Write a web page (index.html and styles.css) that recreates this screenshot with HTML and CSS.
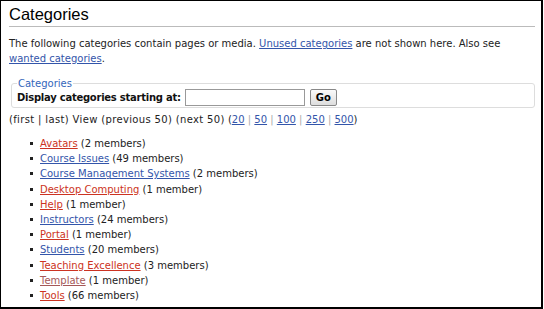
FILE: index.html
```html
<!DOCTYPE html>
<html>
<head>
<meta charset="utf-8">
<link rel="stylesheet" href="styles.css">
</head>
<body>
<div class="frame">
  <h1 class="title">Categories</h1>
  <p class="intro">The following categories contain pages or media. <a class="link" href="#">Unused categories</a> are not shown here. Also see <a class="link" href="#">wanted categories</a>.</p>
  <fieldset class="box">
    <legend class="legend">Categories</legend>
    <div class="row">
      <label class="label">Display categories starting at:</label>
      <input class="field" type="text">
      <button class="go">Go</button>
    </div>
  </fieldset>
  <div class="nav"><span class="pager">(first | last) View (previous 50) (next 50)</span> (<a class="link" href="#">20</a> <span class="sep">|</span> <a class="link" href="#">50</a> <span class="sep">|</span> <a class="link" href="#">100</a> <span class="sep">|</span> <a class="link" href="#">250</a> <span class="sep">|</span> <a class="link" href="#">500</a>)</div>
  <ul class="list">
    <li class="item"><a class="new" href="#">Avatars</a> (2 members)</li>
    <li class="item"><a class="link" href="#">Course Issues</a> (49 members)</li>
    <li class="item"><a class="link" href="#">Course Management Systems</a> (2 members)</li>
    <li class="item"><a class="new" href="#">Desktop Computing</a> (1 member)</li>
    <li class="item"><a class="new" href="#">Help</a> (1 member)</li>
    <li class="item"><a class="link" href="#">Instructors</a> (24 members)</li>
    <li class="item"><a class="new" href="#">Portal</a> (1 member)</li>
    <li class="item"><a class="link" href="#">Students</a> (20 members)</li>
    <li class="item"><a class="new" href="#">Teaching Excellence</a> (3 members)</li>
    <li class="item"><a class="visited" href="#">Template</a> (1 member)</li>
    <li class="item"><a class="new" href="#">Tools</a> (66 members)</li>
  </ul>
</div>
</body>
</html>
```
FILE: styles.css
```css
html, body {
  margin: 0;
  padding: 0;
  background: #fff;
}
.frame {
  box-sizing: border-box;
  width: 543px;
  height: 309px;
  border: 1px solid #000;
  border-right-width: 2px;
  border-bottom-width: 2px;
  padding: 0 6px 0 8px;
  font-family: "DejaVu Sans", Verdana, sans-serif;
  font-size: 10px;
  color: #222;
  overflow: hidden;
}
.title {
  margin: 3px 0 0 0;
  padding: 0 0 2px 0;
  font-family: "Liberation Sans", Arial, sans-serif;
  font-size: 16.5px;
  font-weight: normal;
  color: #000;
  line-height: 20px;
  border-bottom: 1px solid #bbb;
}
.intro {
  margin: 9px 0 0 0;
  line-height: 15px;
}
.link { color: #3355aa; text-decoration: underline; }
.new { color: #cc3322; text-decoration: underline; }
.visited { color: #a55858; text-decoration: underline; }
.box {
  margin: 12px 0 0 2px;
  padding: 0 5px 0 5px;
  border: 1px solid #ddd;
  border-radius: 3px;
}
.legend {
  padding: 0 1px;
  color: #3366bb;
  font-size: 10px;
}
.row {
  display: flex;
  align-items: center;
  gap: 4px;
  padding-bottom: 1px;
}
.label {
  font-weight: bold;
  color: #111;
  letter-spacing: -0.25px;
}
.field {
  width: 118px;
  height: 15px;
  border: 1px solid #999;
  padding: 0;
  margin: 0;
}
.go {
  margin-left: 1px;
  height: 17px;
  padding: 0 5px;
  font-family: "DejaVu Sans", Verdana, sans-serif;
  font-size: 10px;
  font-weight: bold;
  border: 1px solid #888;
  border-radius: 2px;
  background: linear-gradient(#fafafa, #ddd);
}
.nav {
  margin-top: 4px;
  line-height: 15px;
}
.pager { letter-spacing: 0.35px; }
.sep { color: #aaa; }
.list {
  margin: 9px 0 0 0;
  padding: 0 0 0 21px;
  line-height: 15.2px;
  list-style: none;
}
.item::before {
  content: "";
  display: inline-block;
  width: 3px;
  height: 3px;
  background: #222;
  vertical-align: middle;
  margin-right: 7px;
  margin-top: -1px;
}
```
